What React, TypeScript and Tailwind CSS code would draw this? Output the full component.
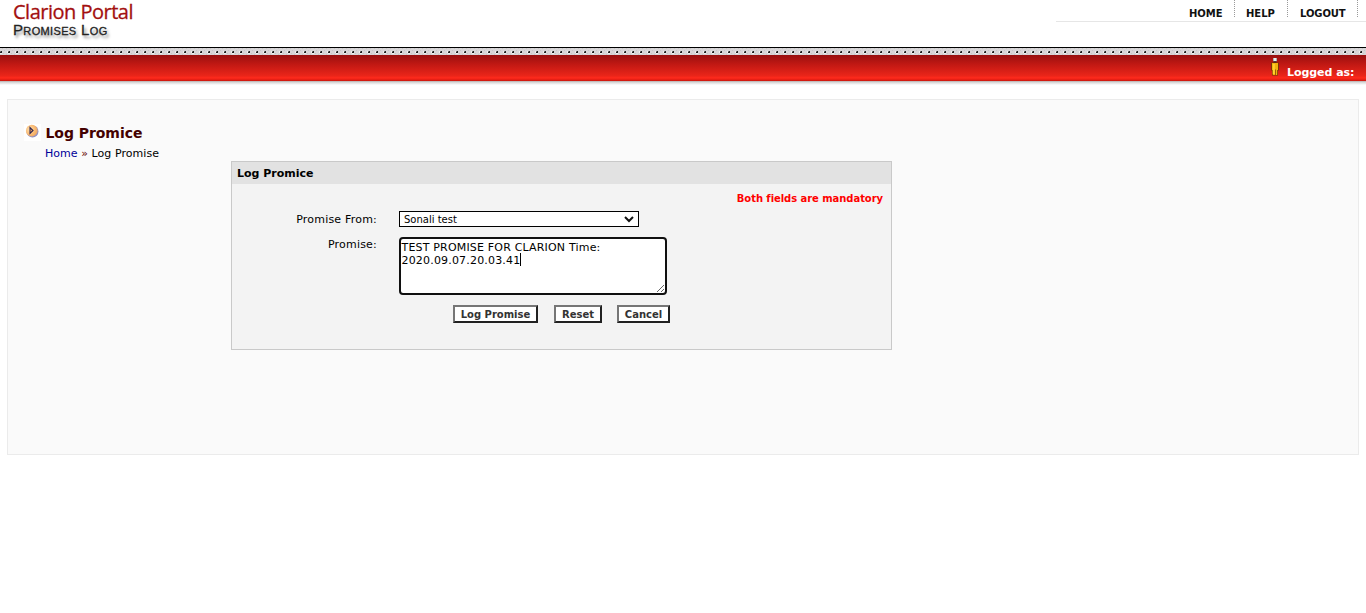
import type { ReactNode } from "react";

function NavLink({ children, className }: { children: ReactNode; className: string }) {
  return (
    <a
      href="#"
      className={`block h-[17px] whitespace-nowrap border-r border-dotted border-[#999] pt-[7px] text-[10px] font-bold leading-[13px] text-[#111] ${className}`}
    >
      {children}
    </a>
  );
}

function FormButton({ children, className }: { children: ReactNode; className: string }) {
  return (
    <button
      type="button"
      className={`h-[18px] whitespace-nowrap border-2 border-b-[#212121] border-l-[#767676] border-r-[#212121] border-t-[#767676] bg-white pt-px text-center text-[10px] font-bold leading-[13px] text-[#333] ${className}`}
    >
      {children}
    </button>
  );
}

function PersonIcon() {
  return (
    <svg width="10" height="20" viewBox="0 0 10 20" className="shrink-0">
      <path d="M1 5.500h8v8H8v5H2v-5H1z" fill="#7a3505" />
      <path d="M2 6h6v7H7.200v5H2.800v-5H2z" fill="#f2b20c" />
      <path d="M2.800 7h2v10h-2z" fill="#ffd230" />
      <path d="M5.500 12.500v5.500" stroke="#9a5d08" />
      <path d="M3 1h4v3.500H3z" fill="#777" />
      <path d="M3.500 1h3v3h-3z" fill="#ececec" />
      <path d="M3.500 5h3" stroke="#222" />
    </svg>
  );
}

function BulletIcon() {
  return (
    <svg width="17" height="17" viewBox="0 0 17 17" className="shrink-0 bg-white">
      <defs>
        <radialGradient id="bullet" cx=".35" cy=".4" r=".7">
          <stop offset="0" stopColor="#ffe0ae" />
          <stop offset=".7" stopColor="#f8b46a" />
          <stop offset="1" stopColor="#dca070" />
        </radialGradient>
      </defs>
      <circle cx="8.500" cy="7.500" r="6" fill="#8e90c8" />
      <circle cx="7.800" cy="6.700" r="5.900" fill="url(#bullet)" />
      <path d="M6 3.500v6L9 6.500z" fill="#f3a660" stroke="#2b2250" strokeWidth="1.100" />
    </svg>
  );
}

export default function App() {
  return (
    <div className="h-[613px] w-[1366px] overflow-hidden bg-white font-['DejaVu_Sans',sans-serif] text-[11px] text-black">
      <header className="flex h-[47px] justify-between">
        <div className="pl-[13px]">
          <div className="h-[22px] whitespace-nowrap font-['Open_Sans',sans-serif] text-[20px] leading-[23px] tracking-[-0.5px] text-[#a30f0f] [-webkit-text-stroke:0.3px_#a30f0f]">
            Clarion Portal
          </div>
          <div className="whitespace-nowrap font-['Liberation_Sans',sans-serif] text-[15px] leading-[15px] tracking-[0.35px] text-[#222] [-webkit-text-stroke:0.3px_#222] [font-variant:small-caps] [text-shadow:2px_3px_3px_#888]">
            Promises Log
          </div>
        </div>
        <nav className="flex h-[22px] w-[310px] justify-end border-b border-[#e6e6e6] pr-[8px]">
          <NavLink className="w-[46px]">HOME</NavLink>
          <NavLink className="w-[53px] pl-[11px]">HELP</NavLink>
          <NavLink className="w-[70px] pl-[12px] tracking-[-0.1px]">LOGOUT</NavLink>
        </nav>
      </header>

      <div className="h-px bg-black" />
      <svg width="1366" height="7" className="block">
        <defs>
          <pattern id="dots" width="8" height="7" patternUnits="userSpaceOnUse">
            <rect width="8" height="7" fill="#d8d6d8" />
            <path d="M2 0h1v1H2zM6 0h1v1H6zM4 2h1v1H4zM3 5h1v1H3zM6 6h1v1H6z" fill="#c8c6c8" />
            <path d="M0 3h2v2H0z" fill="#222" />
            <path d="M0 3h1v1H0z" fill="#777" />
            <path d="M7 3h1v2H7zM0 5h2v1H0z" fill="#f0f0f0" />
          </pattern>
        </defs>
        <rect width="1366" height="7" fill="url(#dots)" />
      </svg>
      <div className="flex h-[26px] justify-end bg-[linear-gradient(#991010,#c01813_35%,#ea2519_80%,#ff2a1c_88%,#e92015_94%,#c9160d)] pr-[12px]">
        <div className="flex pt-[2px]">
          <PersonIcon />
          <span className="ml-[7px] w-[67px] whitespace-nowrap pt-[9px] text-[11px] font-bold leading-[14px] tracking-[-0.05px] text-white">
            Logged as:
          </span>
        </div>
      </div>
      <div className="h-[4px] bg-[linear-gradient(#b5aaaa,#d5d5d5_30%,#fff)]" />

      <main className="ml-[7px] mt-[14px] h-[356px] w-[1352px] border border-[#ebebeb] bg-[#fafafa]">
        <div className="flex h-[61px] pl-[16px] pt-[24px]">
          <BulletIcon />
          <div className="ml-[4px]">
            <h1 className="whitespace-nowrap pl-[0.5px] text-[14px] font-bold leading-[18px] tracking-[-0.05px] text-[#400]">Log Promice</h1>
            <div className="mt-[5px] whitespace-nowrap leading-[14px] tracking-[0.05px]">
              <a href="#" className="text-[#009]">Home</a> <span className="text-[#600]">»</span> Log Promise
            </div>
          </div>
        </div>

        <form className="ml-[223px] h-[189px] w-[661px] border border-[#c9c9c9] bg-[#f3f3f3]">
          <h2 className="h-[22px] bg-[#e2e2e2] pl-[5px] pt-[5px] text-[11px] font-bold leading-[14px]">Log Promice</h2>
          <p className="h-[27px] pr-[8px] pt-[8px] text-right text-[10px] font-bold leading-[14px] tracking-[-0.06px] text-[#f00]">
            Both fields are mandatory
          </p>
          <div className="flex h-[26px]">
            <label className="w-[145px] whitespace-nowrap pt-[2px] text-right leading-[14px] tracking-[0.2px]">Promise From:</label>
            <div className="relative ml-[22px] h-[16px] w-[240px]">
              <select className="block h-[16px] w-[240px] appearance-none border border-black bg-white pl-[4px] pt-px text-[10px] leading-[13px] text-black">
                <option>Sonali test</option>
              </select>
              <svg width="10" height="7" viewBox="0 0 10 7" className="pointer-events-none absolute right-[5px] top-[5px]">
                <path d="M1 1l4 4 4-4" fill="none" stroke="#111" strokeWidth="2" />
              </svg>
            </div>
          </div>
          <div className="flex h-[68px]">
            <label className="w-[145px] pt-px text-right leading-[14px] tracking-[0.2px]">Promise:</label>
            <div className="relative ml-[22px] h-[58px] w-[268px]">
              <textarea
                className="block h-[58px] w-[268px] rounded-[4px] border-2 border-[#101010] bg-white pl-[0.5px] pr-px pt-[2px] text-[11px] leading-[13px] tracking-[0.18px] text-black"
                defaultValue={"TEST PROMISE FOR CLARION Time:\n2020.09.07.20.03.41"}
              />
              <span className="absolute left-[121px] top-[16px] h-[13px] w-px bg-black" />
            </div>
          </div>
          <div className="flex pl-[221px]">
            <FormButton className="w-[85px]">Log Promise</FormButton>
            <FormButton className="ml-[16px] w-[48px]">Reset</FormButton>
            <FormButton className="ml-[15px] w-[53px]">Cancel</FormButton>
          </div>
        </form>
      </main>
    </div>
  );
}
